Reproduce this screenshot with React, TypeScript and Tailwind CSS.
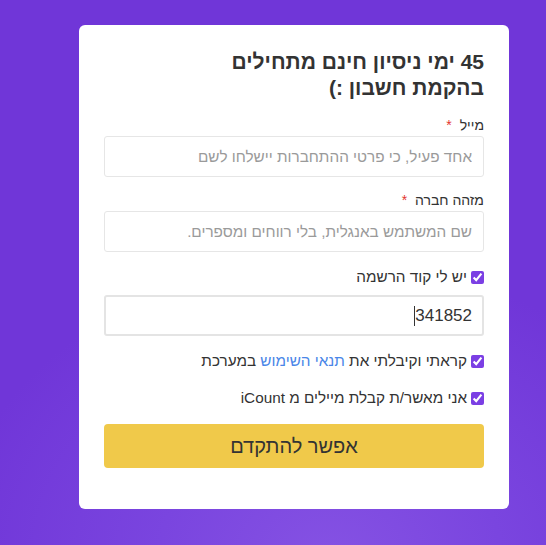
import React from "react";

export default function App() {
  return (
    <div
      className="w-[546px] h-[545px] overflow-hidden"
      style={{
        background:
          "radial-gradient(ellipse 380px 300px at 330px 560px, #8552e3 0%, #7a45df 45%, #7036d8 100%)",
        fontFamily: '"Liberation Sans", Arial, sans-serif',
      }}
    >
      <div className="pt-[25px] pl-[79px]">
        <div dir="rtl" className="w-[430px] h-[484px] bg-white rounded-[6px] px-[25px] pt-[24px]">
          <h1 className="text-[21px] leading-[26px] font-bold text-[#333]">
            45 ימי ניסיון חינם מתחילים
            <br />
            בהקמת חשבון :)
          </h1>

          <label className="block mt-[15px] text-[14px] leading-[18px] text-[#333]">
            מייל <span className="text-[#e3342f] mr-[4px]">*</span>
          </label>
          <input
            type="text"
            placeholder="אחד פעיל, כי פרטי ההתחברות יישלחו לשם"
            className="block mt-[2px] w-full h-[41px] border border-[#e6e6e6] rounded-[3px] px-[11px] text-[15.3px] text-[#333] placeholder:text-[#9a9a9a] outline-none"
          />

          <label className="block mt-[14px] text-[14px] leading-[18px] text-[#333]">
            מזהה חברה <span className="text-[#e3342f] mr-[4px]">*</span>
          </label>
          <input
            type="text"
            placeholder="שם המשתמש באנגלית, בלי רווחים ומספרים."
            className="block mt-[2px] w-full h-[41px] border border-[#e6e6e6] rounded-[3px] px-[11px] text-[15.3px] text-[#333] placeholder:text-[#9a9a9a] outline-none"
          />

          <label className="flex items-center gap-[4px] mt-[16px] h-[18px] text-[15.3px] text-[#333]">
            <input type="checkbox" defaultChecked className="w-[13px] h-[13px] m-0 accent-[#7b3fe4]" />
            <span>יש לי קוד הרשמה</span>
          </label>

          <div className="mt-[9px] w-full h-[41px] border-2 border-[#e4e4e4] rounded-[3px] pr-[10px] flex items-center text-[17px] text-[#333]">
            <span>341852</span>
            <span className="inline-block w-px h-[20px] bg-[#333]" />
          </div>

          <label className="flex items-center gap-[4px] mt-[16px] h-[18px] text-[15.3px] text-[#333]">
            <input type="checkbox" defaultChecked className="w-[13px] h-[13px] m-0 accent-[#7b3fe4]" />
            <span>
              קראתי וקיבלתי את <span className="text-[#4a86e8]">תנאי השימוש</span> במערכת
            </span>
          </label>

          <label className="flex items-center gap-[4px] mt-[19px] h-[18px] text-[15.3px] text-[#333]">
            <input type="checkbox" defaultChecked className="w-[13px] h-[13px] m-0 accent-[#7b3fe4]" />
            <span>אני מאשר/ת קבלת מיילים מ iCount</span>
          </label>

          <button className="block mt-[17px] w-full h-[44px] bg-[#f0c94a] rounded-[4px] text-[20px] text-[#333]">
            אפשר להתקדם
          </button>
        </div>
      </div>
    </div>
  );
}
